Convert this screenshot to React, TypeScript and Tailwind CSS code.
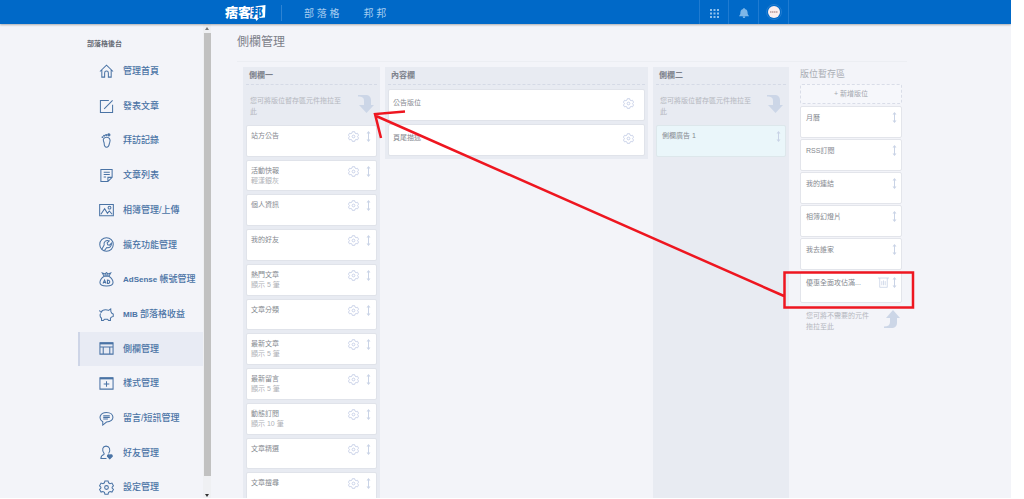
import type { ReactNode } from "react";

type Widget = { title: string; note?: string };

const menu: { label: string; icon: ReactNode; active?: boolean; brand?: string }[] = [
  { label: "管理首頁", icon: <path d="M1 8 8 1.2 15 8M3 6.5V14h3V9.5c0-2.6 4-2.6 4 0V14h3V6.5" /> },
  { label: "發表文章", icon: <path d="M10.500 1.500h-9v13h13V6M5.500 10.500 14.500 1.500" /> },
  {
    label: "拜訪記錄",
    icon: (
      <>
        <path d="M5 6c-1.500 1.500.6 3.700.5 5 0 1.500.2 4.200 2.700 4.200 3.200 0 2.300-3.400 3.300-5.400 1.200-3-.8-5.500-3.500-5.300C6.500 4.600 5.600 5.300 5 6Z" />
        <circle cx="10.500" cy="1.900" r="1.200" fill="currentColor" />
        <circle cx="7.600" cy="2.200" r=".6" />
        <circle cx="5.400" cy="3" r=".5" />
        <circle cx="3.700" cy="4.500" r=".4" />
      </>
    ),
  },
  { label: "文章列表", icon: <path d="M2 1.500h12V10l-4.500 4.500H2ZM14 10H9.500v4.500M5 4.500h6.500M5 7h6.500M5 9.500h2.500" /> },
  {
    label: "相簿管理/上傳",
    icon: (
      <>
        <path d="M.7 1.500h14.600v12H.7ZM2 12l4-6 3 5 2-2.500 3 3.500" />
        <circle cx="11.200" cy="5" r="1.500" />
      </>
    ),
  },
  {
    label: "擴充功能管理",
    icon: (
      <>
        <circle cx="8" cy="8" r="7.200" />
        <path d="m3 13 2.500-4.500C4.500 5 8 2.600 11 4.200L8.700 6.300l.6 2 2 .4 2-2.200c.5 3.500-2.300 5.500-5 4.700L5.700 14.500" />
      </>
    ),
  },
  {
    label: "帳號管理",
    brand: "AdSense",
    icon: (
      <>
        <path d="M5.500 4.500C2.500 6.500 1 9 1 11.300c0 2.700 2 3.700 7 3.700s7-1 7-3.700c0-2.300-1.500-4.800-4.500-6.800ZM5.500 4.500 3.500 1l3 1L8 .6 9.500 2l3-1-2 3.500M6 3.300h4" />
        <path d="m4.300 12.300 1.600-3.800 1.600 3.800M5 11.300h2M9 8.500v3.800c3.300 0 3.300-3.800 0-3.800Z" />
      </>
    ),
  },
  {
    label: "部落格收益",
    brand: "MIB",
    icon: <path d="M.6 3.500c.2 1.200.8 1.800 1.700 2.200C3 3.800 5 3 7 3c1.200 0 2.300.2 3.200.6L12.500 2l.2 3 1 1.700 1.500.8V10l-2 .8-1 1.200v2.300h-2L9 13H6l-1.300 1.300h-2V12C1 10.500.9 8.500 1.700 7" />,
  },
  {
    label: "側欄管理",
    active: true,
    icon: (
      <>
        <path d="M1 2h14v12H1ZM1 6.500h14M4.500 6.500V14M11.500 6.500V14" />
        <path d="M1 2.600h14" strokeWidth="2" />
      </>
    ),
  },
  {
    label: "樣式管理",
    icon: (
      <>
        <path d="M1 2h14v12H1ZM8 5.500v6M5 8.500h6" />
        <path d="M1 2.600h14" strokeWidth="2" />
      </>
    ),
  },
  {
    label: "留言/短訊管理",
    icon: <path d="M4 11.500C-1 8.500.8 1.500 8 1.500c8.800 0 9.500 10 0 10.300L4 15ZM4.500 5h7M4.500 6.800h7M4.500 8.600h5" />,
  },
  {
    label: "好友管理",
    icon: (
      <>
        <path d="M8 14.500H2c0-2.500.5-3.500 3.200-4.300L5.500 9C2.500 5 4 1.200 7.500 1.200S13 5 10.200 9" />
        <path d="M11.500 14.700 9 12c0-2 2.300-1.800 2.500-.7.300-1.100 2.700-1.300 2.700.7Z" fill="currentColor" />
      </>
    ),
  },
  {
    label: "設定管理",
    icon: <GearPaths />,
  },
];

const sideOne: Widget[] = [
  { title: "站方公告" },
  { title: "活動快報", note: "輕漾銀灰" },
  { title: "個人資訊" },
  { title: "我的好友" },
  { title: "熱門文章", note: "顯示 5 筆" },
  { title: "文章分類" },
  { title: "最新文章", note: "顯示 5 筆" },
  { title: "最新留言", note: "顯示 5 筆" },
  { title: "動態訂閱", note: "顯示 10 筆" },
  { title: "文章精選" },
  { title: "文章搜尋" },
];

const shelf = ["月曆", "RSS訂閱", "我的連結", "相簿幻燈片", "我去誰家", "優惠全面攻佔滿..."];

function GearPaths() {
  return (
    <>
      <path d="M6.300 1h3.400l.5 2 1.600.9 2-.6 1.600 2.900L14 7.700v1l1.400 1.400-1.600 2.800-2-.6-1.600.9-.5 1.900H6.300l-.5-1.900-1.600-.9-2 .6-1.600-2.800L2 8.700v-1L.6 6.200l1.600-2.900 2 .6L5.800 3Z" />
      <circle cx="8" cy="8" r="2" />
    </>
  );
}

function Icon({ children, className }: { children: ReactNode; className: string }) {
  return (
    <svg viewBox="0 0 16 16" fill="none" stroke="currentColor" strokeWidth="1.1" className={className} aria-hidden="true">
      {children}
    </svg>
  );
}

function GearButton() {
  return (
    <button type="button" aria-label="設定" className="text-[#bcc7e3]">
      <Icon className="size-[11px]">
        <GearPaths />
      </Icon>
    </button>
  );
}

function DragHandle() {
  return (
    <svg viewBox="0 0 5 11" className="h-[11px] w-[5px] text-[#c9d3e6]" fill="currentColor" aria-hidden="true">
      <path d="M2.500 0 4.500 2.500H3v6h1.500L2.500 11 .5 8.500H2v-6H.5Z" />
    </svg>
  );
}

function ColumnTitle({ children }: { children: ReactNode }) {
  return (
    <h2 className="h-[18px] border-b border-dashed border-[#d5dae6] pl-[3px] text-[8px] leading-[17px] font-bold text-[#7b808a]">
      {children}
    </h2>
  );
}

function DropHint() {
  return (
    <div className="flex h-10 justify-between pt-[10px] pr-[3px] pl-1 text-[7px] leading-[11px] text-[#b4b7be]">
      <p>
        您可將版位暫存區元件拖拉至
        <br />此
      </p>
      <svg viewBox="0 0 16 18" className="h-[18px] w-4" fill="#ccd6e7" aria-hidden="true">
        <path d="M0 0h7c4.500 0 6 2 6 5.500V10h3l-7.500 8L1 10h5V6C6 2.500 4 1.500 0 1.500Z" />
      </svg>
    </div>
  );
}

export default function App() {
  return (
    <div
      lang="zh-Hant"
      className="relative h-screen overflow-hidden bg-white pr-[13px] pb-px font-['Liberation_Sans','Noto_Sans_CJK_TC',sans-serif]"
    >
      <div className="flex h-full flex-col overflow-hidden bg-[#f3f4f9]">
        <header className="relative flex h-6 shrink-0 items-center justify-between bg-[#0069c8] pr-[222px] pl-[225px] shadow-[0_1px_2px_rgba(0,0,0,0.3)]">
          <div className="flex items-center pt-px">
            <a href="#" className="flex items-center text-[13px] leading-[22px] font-black text-white">
              痞客
              <span className="relative text-[12px] text-[#0069c8]">
                <svg viewBox="0 0 16 16" className="absolute top-[3px] -left-px size-4" fill="#fff" aria-hidden="true">
                  <path d="M1 2 15.500 0 15 12.500 9 13 6.500 16 5.500 14 0 13.500Z" />
                </svg>
                <span className="relative">邦</span>
              </span>
            </a>
            <nav className="ml-[18px] flex h-4 items-center gap-6 border-l border-[#2d83d3] pl-[22px] text-[10px] leading-4 text-[#a6cdf0]">
              <a href="#" className="pt-[2px]">部 落 格</a>
              <a href="#" className="pt-[2px]">邦 邦</a>
            </nav>
          </div>
          <div className="flex h-6 divide-x divide-[#1f7bd1] border-x border-[#1f7bd1]">
            <button type="button" aria-label="服務" className="grid w-[29px] place-items-center pt-[2px] text-[#8fc0ec]">
              <svg viewBox="0 0 9 9" className="size-[9px]" fill="currentColor">
                <path d="M0 0h2v2H0ZM3.500 0h2v2h-2ZM7 0h2v2H7ZM0 3.500h2v2H0ZM3.500 3.500h2v2h-2ZM7 3.500h2v2H7ZM0 7h2v2H0ZM3.500 7h2v2h-2ZM7 7h2v2H7Z" />
              </svg>
            </button>
            <button type="button" aria-label="通知" className="grid w-[30px] place-items-center pt-[2px] text-[#7db6e8]">
              <svg viewBox="0 0 10 10" className="size-[10px]" fill="currentColor">
                <path d="M5 0c.6 0 .8.500.8 1C8 1.500 8.700 3 8.700 6L10 8.200H0L1.300 6c0-3 .7-4.500 2.900-5 0-.5.200-1 .8-1ZM3.700 8.500h2.600c0 2-2.600 2-2.600 0Z" />
              </svg>
            </button>
            <button type="button" aria-label="帳號" className="grid w-[29px] place-items-center">
              <svg viewBox="0 0 16 16" className="size-4">
                <circle cx="8" cy="8" r="7.500" fill="none" stroke="#2f86d6" strokeWidth=".7" />
                <circle cx="8" cy="8" r="6" fill="#fbeeee" />
                <path d="M4 8h8" stroke="#b99a9a" strokeWidth="1.500" strokeDasharray="1.500 .5" />
              </svg>
            </button>
          </div>
        </header>

        <div className="flex min-h-0 flex-1 pr-[104px] pl-[78px]">
          <aside className="w-[125px] shrink-0 pt-[14px]">
            <h2 className="pl-[9px] text-[7px] leading-[11px] font-bold text-[#666b75]">部落格後台</h2>
            <nav className="mt-[5px] grid h-[451px] auto-rows-fr">
              {menu.map((item) => (
                <a
                  key={item.label}
                  href="#"
                  className={
                    item.active
                      ? "flex items-center gap-[9px] border-l-2 border-[#ced5e7] bg-[#e8ebf4] pl-[19px] text-[#4a73a5]"
                      : "flex items-center gap-[9px] border-l-2 border-transparent pl-[19px] text-[#4a73a5]"
                  }
                >
                  <Icon className="size-[15px] shrink-0">{item.icon}</Icon>
                  <span className="pt-px text-[9px] font-medium whitespace-nowrap">
                    {item.brand && <b className="text-[8px]">{item.brand} </b>}
                    {item.label}
                  </span>
                </a>
              ))}
            </nav>
          </aside>

          <div className="flex w-2 shrink-0 flex-col items-center bg-[#eff0f3] pt-[3px] pb-px">
            <svg viewBox="0 0 4 3" className="h-[3px] w-1" fill="#777">
              <path d="M0 3 2 0l2 3Z" />
            </svg>
            <div className="mt-[3px] mb-[18px] w-[7px] flex-1 bg-[#c1c1c1]" />
            <svg viewBox="0 0 4 3" className="h-[3px] w-1" fill="#333">
              <path d="M0 0h4L2 3Z" />
            </svg>
          </div>

          <main className="flex min-w-0 flex-1 flex-col pl-[26px]">
            <h1 className="h-[38px] shrink-0 border-b border-[#eceef3] pt-[9px] text-[12px] leading-[18px] text-[#7c8089]">側欄管理</h1>

            <div className="flex min-h-0 flex-1 items-start gap-[5px] pt-[5px] pr-[5px] pl-[6px]">
              <section className="h-full w-[137px] shrink-0 bg-[#e8ebf2] px-[3px]">
                <ColumnTitle>側欄一</ColumnTitle>
                <DropHint />
                <ul className="grid h-[379px] auto-rows-fr gap-[3px]">
                  {sideOne.map((item) => (
                    <li key={item.title} className="flex justify-between rounded-[2px] border border-[#e0e3ea] bg-white pt-[5px] pr-[5px] pl-1">
                      <div className="text-[7px] leading-[10px]">
                        <p className="text-[#85898f]">{item.title}</p>
                        {item.note && <p className="text-[#afb2b7]">{item.note}</p>}
                      </div>
                      <div className="flex items-start gap-[7px]">
                        <GearButton />
                        <DragHandle />
                      </div>
                    </li>
                  ))}
                </ul>
              </section>

              <section className="min-w-0 flex-1 bg-[#e8ebf2] px-[3px] pb-[3px]">
                <ColumnTitle>內容欄</ColumnTitle>
                <ul className="grid gap-[3px] pt-1">
                  {["公告版位", "頁尾描述"].map((title) => (
                    <li
                      key={title}
                      className="flex h-8 items-center justify-between rounded-[2px] border border-[#e0e3ea] bg-white pr-[10px] pb-1 pl-1 text-[7px] text-[#85898f]"
                    >
                      {title}
                      <GearButton />
                    </li>
                  ))}
                </ul>
              </section>

              <section className="h-full w-[136px] shrink-0 bg-[#e8ebf2] px-[3px]">
                <ColumnTitle>側欄二</ColumnTitle>
                <DropHint />
                <div className="flex h-8 justify-between rounded-[2px] border border-[#dde7eb] bg-[#eaf6fa] pt-[5px] pr-1 pl-[5px]">
                  <p className="text-[7px] leading-[10px] text-[#85898f]">側欄廣告 1</p>
                  <DragHandle />
                </div>
              </section>

              <section className="ml-[6px] w-[102px] shrink-0">
                <h2 className="h-[17px] text-[9px] leading-[14px] text-[#a9adb4]">版位暫存區</h2>
                <button
                  type="button"
                  className="block h-5 w-full rounded-[2px] border border-dashed border-[#d9dde8] bg-[#f6f7fb] text-[7px] text-[#a3a7ae]"
                >
                  + 新增版位
                </button>
                <ul className="mt-[2px] grid gap-px">
                  {shelf.map((title, index) => (
                    <li key={title} className="flex h-8 justify-between rounded-[2px] border border-[#e3e5eb] bg-white pt-[5px] pr-1 pl-[5px]">
                      <p className="text-[7px] leading-[11px] text-[#85898f]">{title}</p>
                      <div className="flex items-start gap-[3px]">
                        {index === shelf.length - 1 && (
                          <button type="button" aria-label="刪除" className="text-[#c6d0e4]">
                            <Icon className="size-[11px]">
                              <path d="M0 1.500h16M2.500 1.500V15h11V1.500M5.500 6v6M8 5v7M10.500 6v6" />
                            </Icon>
                          </button>
                        )}
                        <DragHandle />
                      </div>
                    </li>
                  ))}
                </ul>
                <div className="flex justify-between pt-[7px] pr-[2px] pl-[6px] text-[7px] leading-[11px] text-[#b4b7be]">
                  <p>
                    您可將不需要的元件
                    <br />
                    拖拉至此
                  </p>
                  <svg viewBox="0 0 16 18" className="h-[18px] w-4" fill="#ccd6e7" aria-hidden="true">
                    <path d="M0 18h7c4.500 0 6-2 6-5.500V8h3L9 0 2 8h4v4c0 3-2 4.500-6 4.500Z" />
                  </svg>
                </div>
              </section>
            </div>
          </main>
        </div>
      </div>

      <svg
        viewBox="0 0 1024 499"
        className="pointer-events-none absolute top-0 left-0 h-[499px] w-[1024px]"
        fill="none"
        stroke="#ee1620"
        strokeWidth="2.500"
        aria-hidden="true"
      >
        <path d="M784.500 272.500h128.500v35H784.500ZM784 296 375 115.500M405 111.500 375 114l6 24" />
      </svg>
    </div>
  );
}
